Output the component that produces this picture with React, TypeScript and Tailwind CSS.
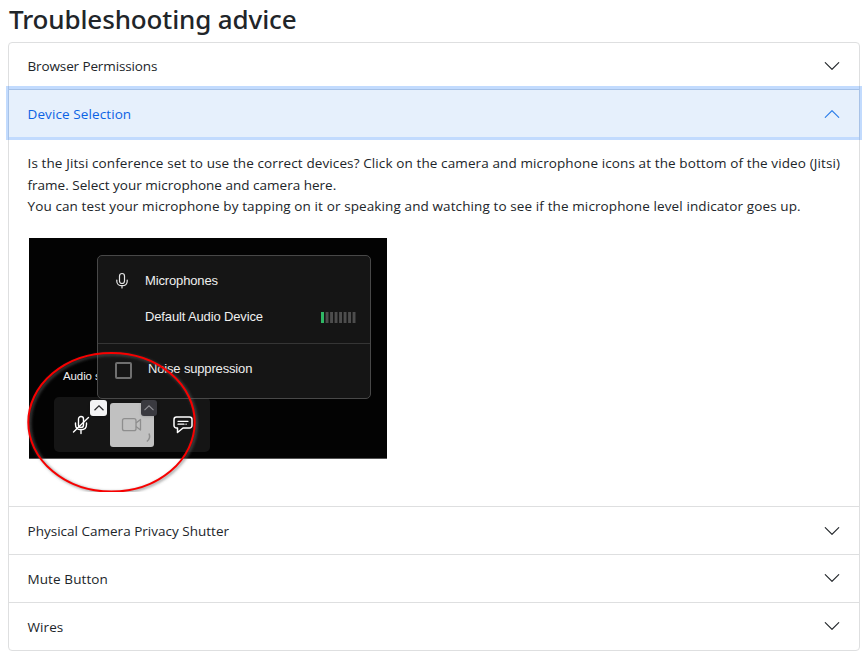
import React from "react";

function Chevron({ open = false, className = "mb-[2px]" }: { open?: boolean; className?: string }) {
  return (
    <svg width="18" height="18" viewBox="0 0 16 16" className={open ? "mt-px rotate-180 text-[#2b7de9]" : `text-[#212529] ${className}`} fill="currentColor">
      <path fillRule="evenodd" d="M1.646 4.646a.5.5 0 0 1 .708 0L8 10.293l5.646-5.647a.5.5 0 0 1 .708.708l-6 6a.5.5 0 0 1-.708 0l-6-6a.5.5 0 0 1 0-.708z" />
    </svg>
  );
}

function Row({ title, spacing, icon }: { title: string; spacing: string; icon?: string }) {
  return (
    <button className="flex h-[47px] w-full items-center justify-between pr-[18px] pl-[18.5px] text-left">
      <span className={spacing}>{title}</span>
      <Chevron className={icon} />
    </button>
  );
}

function Meter() {
  return (
    <svg width="35" height="11" viewBox="0 0 35 11">
      <rect width="3" height="11" fill="#2fb765" />
      {[4.6, 9.1, 13.6, 18.1, 22.6, 27.1, 31.6].map((x) => (
        <rect key={x} x={x} width="2.900" height="11" fill="#4d4d4d" />
      ))}
    </svg>
  );
}

function DeviceMenu() {
  return (
    <div className="absolute top-[17px] left-[68px] h-[144px] w-[274px] rounded-[5px] border border-[#484848] bg-[#151515] text-[13px] leading-[18px]">
      <div className="flex h-[88px] flex-col border-b border-[#353535] pt-4">
        <div className="flex items-center">
          <svg className="mr-[17px] ml-[18px]" width="12" height="18" viewBox="0 0 12 18" fill="none" stroke="#e4e4e4" strokeWidth="1.2" strokeLinecap="round">
            <rect x="3.5" y="1.5" width="5" height="10" rx="2.5" />
            <path d="M.8 8v1.2c0 2.8 2.2 4.5 5.2 4.5s5.2-1.7 5.2-4.5V8M6 14v2" />
          </svg>
          <span className="tracking-[-0.14px]">Microphones</span>
        </div>
        <div className="mt-[18px] flex items-center justify-between pr-[14px] pl-[47px]">
          <span className="tracking-[-0.14px]">Default Audio Device</span>
          <span className="pt-px"><Meter /></span>
        </div>
      </div>
      <div className="flex items-center pt-[15px] pl-[17px]">
        <span className="mt-[3px] h-[17px] w-[17px] rounded-[2px] border-2 border-[#6f6f6f]" />
        <span className="ml-4 tracking-[-0.16px]">Noise suppression</span>
      </div>
    </div>
  );
}

function Toolbar() {
  return (
    <div className="absolute top-[159px] left-[25px] flex h-[55px] w-[156px] items-center rounded-[5px] bg-[#151515]">
      <svg className="mt-px ml-[18px]" width="18" height="20" viewBox="0 0 18 20" fill="none" stroke="#fff" strokeWidth="1.400" strokeLinecap="round">
        <rect x="6.500" y="1.500" width="5" height="11" rx="2.500" />
        <path d="M3.500 8v1.500c0 3.500 2.300 5.200 5.500 5.200s5.500-1.700 5.500-5.200V8M9 15v3.500M1.500 17L16.500 2.500" />
      </svg>
      <div className="mt-px ml-5 flex h-11 w-11 items-center justify-center rounded-[3px] bg-[#c1c1c1]">
        <svg width="44" height="44" viewBox="0 0 44 44" fill="none" stroke="#8e8e8e" strokeWidth="1.300" strokeLinejoin="round">
          <rect x="12.500" y="15.700" width="13.500" height="12" rx="2" />
          <path d="M26 20l4.500-3.500v10.500L26 23.500" />
          <path d="M39 30.500c1.200 3 .5 6-2.200 8" strokeWidth="1.500" />
        </svg>
      </div>
      <svg className="mt-[2px] ml-[18px]" width="22" height="20" viewBox="0 0 22 20" fill="none" stroke="#fff" strokeWidth="1.500" strokeLinejoin="round" strokeLinecap="round">
        <path d="M4.500 2h13A2.500 2.500 0 0 1 20 4.500v6a2.500 2.500 0 0 1-2.500 2.500h-6.500l-5.500 4.500V13h-1A2.500 2.500 0 0 1 2 10.500v-6A2.500 2.500 0 0 1 4.500 2z" />
        <path d="M6 6.300h10M6 9.200h6M14 9.200h.2" strokeWidth="1.300" />
      </svg>
      <span className="absolute top-[3px] left-[36px] flex h-4 w-[17px] items-center justify-center rounded-[3px] bg-[#f3f3f4] shadow">
        <svg width="10" height="6" viewBox="0 0 10 6" fill="none" stroke="#29292c" strokeWidth="1.200"><path d="M.5 5.200L5 .8l4.500 4.400" /></svg>
      </span>
      <span className="absolute top-[3px] left-[87px] flex h-4 w-4 items-center justify-center rounded-[3px] bg-[#3a3a40] shadow">
        <svg width="10" height="6" viewBox="0 0 10 6" fill="none" stroke="#909096" strokeWidth="1.100"><path d="M.5 5.200L5 .8l4.500 4.400" /></svg>
      </span>
    </div>
  );
}

function JitsiPicture() {
  return (
    <div className="relative mt-[20px] ml-[20px] h-[221px] w-[358px] border-b border-[#555] bg-[#030303] font-['Liberation_Sans',Arial,sans-serif] text-[#efefef]">
      <span className="absolute top-[130px] left-[34px] text-[11.500px] leading-4 tracking-[-0.1px] whitespace-nowrap">Audio settings</span>
      <Toolbar />
      <DeviceMenu />
      <svg className="absolute top-[111px] left-[-4px]" width="180" height="143" viewBox="0 0 180 143" fill="none">
        <defs>
          <filter id="soft" x="-10%" y="-10%" width="120%" height="120%"><feGaussianBlur stdDeviation="1.500" /></filter>
        </defs>
        <ellipse cx="88" cy="74.500" rx="83.200" ry="69" stroke="#666" strokeOpacity=".75" strokeWidth="2.200" filter="url(#soft)" />
        <ellipse cx="86.500" cy="73.300" rx="83.200" ry="69.300" stroke="#f80000" strokeWidth="2" />
      </svg>
    </div>
  );
}

export default function App() {
  return (
    <main className="h-[664px] w-[865px] overflow-hidden bg-white px-2 font-['Open_Sans','Noto_Sans',sans-serif] text-[13.500px] text-[#212529]">
      <h1 className="h-[42px] pt-[3px] pl-px font-['Noto_Sans','Open_Sans',sans-serif] text-[26px] leading-[32px] font-medium tracking-[-0.13px] whitespace-nowrap">Troubleshooting advice</h1>
      <section className="h-[609px] w-[852px] rounded-[4px] border border-[#dedfe0]">
        <div className="h-[46px]"><Row title="Browser Permissions" spacing="tracking-[-0.12px]" /></div>
        <button className="relative flex h-[48px] w-full items-center justify-between bg-[#e6f0fc] pr-[18px] pl-[18.5px] text-left text-[#0c63e4] shadow-[inset_0_1px_0_#a5c1e7,0_0_0_3px_rgba(13,110,253,0.25)]">
          <span className="pt-[2px] tracking-[0.1px]">Device Selection</span>
          <Chevron open />
        </button>
        <div className="h-[369px] overflow-hidden pt-4">
          <p className="pl-[18.5px] leading-[21.500px] whitespace-nowrap">
            <span className="tracking-[0.11px]">Is the Jitsi conference set to use the correct devices? Click on the camera and microphone icons at the bottom of the video (Jitsi)</span><br />
            <span className="tracking-[0.01px]">frame. Select your microphone and camera here.</span><br />
            <span className="tracking-[0.11px]">You can test your microphone by tapping on it or speaking and watching to see if the microphone level indicator goes up.</span>
          </p>
          <JitsiPicture />
        </div>
        <div className="border-t border-[#dedfe0]"><Row title="Physical Camera Privacy Shutter" spacing="pt-px tracking-[0.01px]" icon="mb-0" /></div>
        <div className="border-t border-[#dedfe0]"><Row title="Mute Button" spacing="pt-px tracking-[0.1px]" /></div>
        <div className="border-t border-[#dedfe0]"><Row title="Wires" spacing="pt-px tracking-[0.1px]" /></div>
      </section>
    </main>
  );
}
